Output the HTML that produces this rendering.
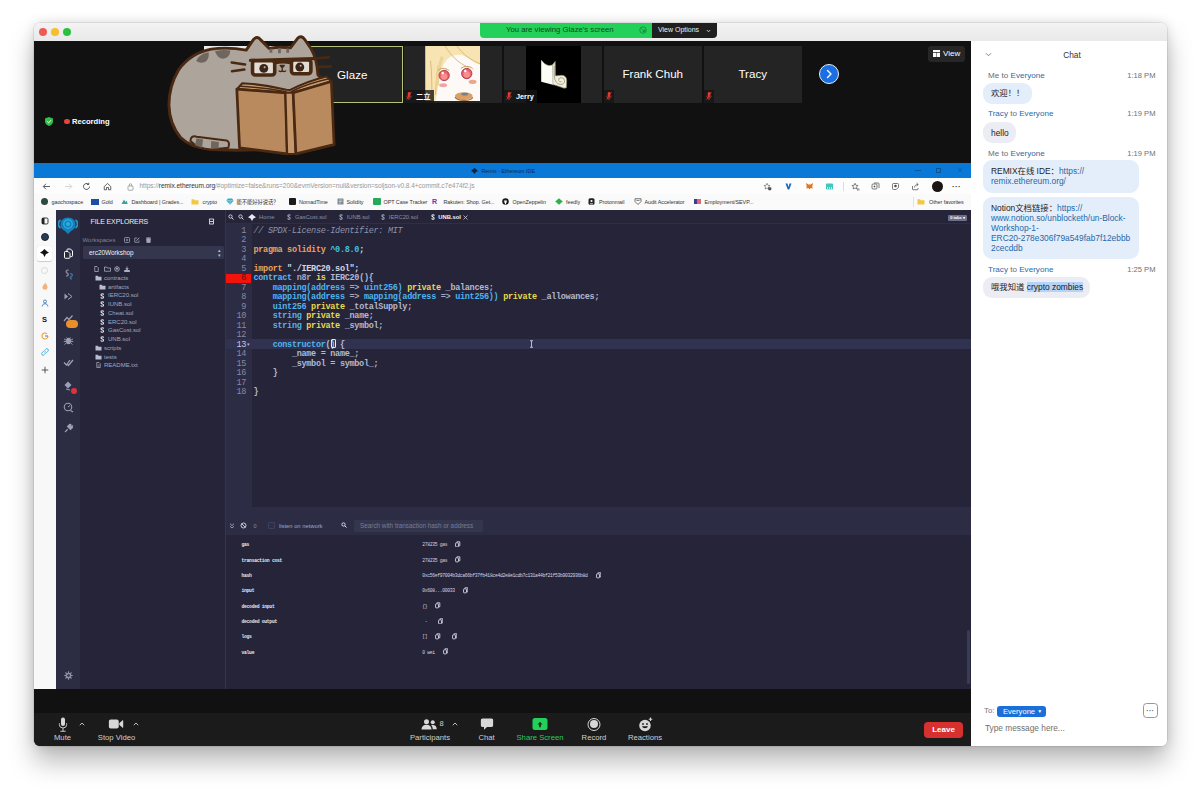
<!DOCTYPE html>
<html lang="en">
<head>
<meta charset="utf-8">
<title>Zoom Meeting</title>
<style>
*{box-sizing:border-box;margin:0;padding:0}
html,body{width:1200px;height:791px;overflow:hidden;background:#fff}
body{font-family:"Liberation Sans","Noto Sans CJK SC",sans-serif;position:relative;color:#222}
.abs{position:absolute}
#win{position:absolute;left:34px;top:22.5px;width:1132.5px;height:723px;border-radius:6px;background:#fff;
 box-shadow:0 0 0 0.5px rgba(0,0,0,.14),0 16px 26px rgba(0,0,0,.27),0 0 12px rgba(0,0,0,.13);overflow:hidden}
#win *{position:absolute}
#win span,#win b,#win i,#win a{position:static}
#titlebar{left:0;top:0;width:1133px;height:18px;background:linear-gradient(#f3f3f3,#e9e9e9)}
.tl{width:8px;height:8px;border-radius:50%;top:5.2px}
#main{left:0;top:18px;width:937px;height:705px;background:#111}
#chat{left:937px;top:18px;width:196px;height:705px;background:#fff}
/* top banner */
#banner{left:446px;top:0.5px;width:171.5px;height:14.5px;background:#23d05a;border-radius:0 0 0 4px;color:#0b4a20;font-size:7.75px;line-height:14.5px;text-align:left;padding-left:26px;white-space:nowrap}
#vopt{left:617.5px;top:0.5px;width:65.5px;height:14.5px;background:#1f1f1f;border-radius:0 0 4px 0;color:#eee;font-size:7px;line-height:14px;text-align:left;padding-left:6.5px;white-space:nowrap}
/* participant tiles */
.tile{top:27.5px;height:57px;background:#242424;width:97.5px}
.tname{color:#fff;font-size:11.6px;width:100%;text-align:center;top:16px;left:0;line-height:16px}
.tlabel{left:0;bottom:0;height:12.5px;background:rgba(20,20,20,.78);color:#fff;font-size:7.3px;line-height:13px;padding:0 3px 0 12px;white-space:nowrap}
.mic{left:1.5px;bottom:1.5px;width:6px;height:10px}
/* toolbar */
#toolbar{left:0;top:682.5px;width:937px;height:41.5px;background:#1b1b1b}
.tb{color:#d0d0d0;font-size:7.7px;text-align:center;white-space:nowrap;top:29px;line-height:10px;transform:translateX(-50%)}
.tbi{top:11px;transform:translateX(-50%)}
</style>
</head>
<body>
<div id="win">
  <div id="titlebar">
    <div class="tl" style="left:5px;background:#ee5b54"></div>
    <div class="tl" style="left:17px;background:#f6bd2f"></div>
    <div class="tl" style="left:29px;background:#2bc13f"></div>
    <div id="banner">You are viewing Glaze's screen</div>
    <div id="vopt">View Options</div><svg style="left:672px;top:6px;width:5px;height:4px" viewBox="0 0 10 8"><path d="M1.500 2L5 5.500L8.500 2" stroke="#eee" stroke-width="1.600" fill="none"/></svg><svg style="left:605px;top:3.500px;width:8px;height:8px" viewBox="0 0 16 16"><circle cx="8" cy="8" r="6.500" stroke="#13803a" stroke-width="1.500" fill="none"/><path d="M4.500 5L11.500 11M11.500 11V6.500M11.500 11H7" stroke="#13803a" stroke-width="1.500" fill="none"/></svg>
  </div>
  <div id="main">
    <div id="strip" style="left:0;top:0;width:937px;height:122px">
      <div class="tile" style="left:170px;top:5.5px;height:56.5px"><div style="left:0;top:0;width:97.5px;height:56.5px;background:#ececec"></div></div>
      <div class="tile" style="left:270px;top:5.5px;height:56.5px;width:98.5px;border:1px solid #b5c27a;background:#232323"><div class="tname" style="top:20px;left:-1px">Glaze</div></div>
      <div class="tile" style="left:370px;top:5.5px;height:56.5px">
        <svg style="left:20.7px;top:0.3px;width:55.5px;height:55px" viewBox="0 0 111 112">
          <rect width="111" height="112" fill="#fdf9f6"/>
          <path d="M0 0H111V38C100 36 92 26 78 20C64 15 50 20 42 30C32 42 28 60 26 80C25 92 22 104 20 112H0Z" fill="#f7e4b2"/>
          <path d="M40 0C52 20 66 34 88 44M64 0C76 16 90 28 111 36M10 30C14 60 12 90 14 112M26 40C22 60 22 80 20 100" stroke="#d7b56e" stroke-width="1.800" fill="none"/>
          <path d="M34 22C28 40 24 58 25 80" stroke="#ecd39a" stroke-width="6" fill="none"/>
          <circle cx="38" cy="60" r="10.500" fill="#ee5f6c"/><circle cx="38" cy="62" r="6.500" fill="#f88f8c"/><circle cx="38" cy="60" r="10.500" fill="none" stroke="#a53546" stroke-width="1.800"/><circle cx="35" cy="55" r="2.500" fill="#fff"/>
          <circle cx="84" cy="56" r="10.500" fill="#ee5f6c"/><circle cx="84" cy="58" r="6.500" fill="#f88f8c"/><circle cx="84" cy="56" r="10.500" fill="none" stroke="#a53546" stroke-width="1.800"/><circle cx="81" cy="51" r="2.500" fill="#fff"/>
          <path d="M26 50C30 44 40 44 48 50M72 46C78 40 90 40 96 46" stroke="#c79a5e" stroke-width="2" fill="none"/>
          <ellipse cx="36" cy="80" rx="8" ry="4" fill="#efa4a6"/><ellipse cx="96" cy="73" rx="8" ry="4.500" fill="#e9a78f"/>
          <ellipse cx="78" cy="102" rx="18" ry="8" fill="#dba066"/><ellipse cx="80" cy="98" rx="7" ry="2.800" fill="#6c8296"/>
          <path d="M60 104C64 113 94 113 96 104" stroke="#a86a36" stroke-width="2.200" fill="none"/>
        </svg>
        <div class="tlabel" style="font-weight:bold">二立</div>
        <svg class="mic" viewBox="0 0 12 18"><rect x="3.5" y="1" width="5" height="10" rx="2.5" fill="#e8382d"/><path d="M1.5 8.5a4.5 4.5 0 0 0 9 0M6 13v4" stroke="#e8382d" stroke-width="1.6" fill="none"/><path d="M10.5 1L1.5 16" stroke="#e8382d" stroke-width="1.8"/></svg>
      </div>
      <div class="tile" style="left:470px;top:5.5px;height:56.5px">
        <div style="left:22px;top:0;width:54.5px;height:56.5px;background:#000"></div>
        <svg style="left:22px;top:0.5px;width:54.2px;height:54.8px" viewBox="258 62 542 548">
          <path d="M524 240L550 206L552 345Q553 352 562 350L612 345Q665 345 665 400L662 470L640 474L545 442L526 440Z" fill="#f1efdf" stroke="#8b8760" stroke-width="7"/>
          <path d="M410 192L442 228Q480 258 524 240L526 440L410 410Z" fill="#fdfdf8"/>
          <path d="M412 194L444 230Q482 260 524 243L548 210" stroke="#a5a177" stroke-width="7" fill="none"/>
          <path d="M540 250L541 352Q548 430 600 436Q644 440 644 400Q642 366 608 368Q578 372 584 398Q590 414 614 410" stroke="#8b8760" stroke-width="7" fill="none"/>
        </svg>
        <div class="tlabel" style="font-weight:bold">Jerry</div>
        <svg class="mic" viewBox="0 0 12 18"><rect x="3.5" y="1" width="5" height="10" rx="2.5" fill="#e8382d"/><path d="M1.5 8.5a4.5 4.5 0 0 0 9 0M6 13v4" stroke="#e8382d" stroke-width="1.6" fill="none"/><path d="M10.5 1L1.5 16" stroke="#e8382d" stroke-width="1.8"/></svg>
      </div>
      <div class="tile" style="left:570px;top:5.5px;height:56.5px"><div class="tname" style="top:20px">Frank Chuh</div><div class="tlabel" style="padding:0;width:10px"></div>
        <svg class="mic" viewBox="0 0 12 18"><rect x="3.5" y="1" width="5" height="10" rx="2.5" fill="#e8382d"/><path d="M1.5 8.5a4.5 4.5 0 0 0 9 0M6 13v4" stroke="#e8382d" stroke-width="1.6" fill="none"/><path d="M10.5 1L1.5 16" stroke="#e8382d" stroke-width="1.8"/></svg>
      </div>
      <div class="tile" style="left:670px;top:5.5px;height:56.5px"><div class="tname" style="top:20px">Tracy</div><div class="tlabel" style="padding:0;width:10px"></div>
        <svg class="mic" viewBox="0 0 12 18"><rect x="3.5" y="1" width="5" height="10" rx="2.5" fill="#e8382d"/><path d="M1.5 8.5a4.5 4.5 0 0 0 9 0M6 13v4" stroke="#e8382d" stroke-width="1.6" fill="none"/><path d="M10.5 1L1.5 16" stroke="#e8382d" stroke-width="1.8"/></svg>
      </div>
      <div style="left:785px;top:23.5px;width:20px;height:20px;border-radius:50%;background:#1b6fe3;border:1.5px solid #e6eefb"></div>
      <svg style="left:791px;top:28.5px;width:8px;height:10px" viewBox="0 0 8 10"><path d="M2.5 1.5L6 5L2.5 8.5" stroke="#fff" stroke-width="1.4" fill="none" stroke-linecap="round" stroke-linejoin="round"/></svg>
      <!-- view button -->
      <div style="left:894px;top:5px;width:37px;height:16px;background:#262626;border-radius:3px"></div>
      <svg style="left:899px;top:9px;width:7px;height:7px" viewBox="0 0 14 14"><path d="M0 0h14v4H0zM0 5.5h6.5v8.5H0zM7.5 5.5H14v8.5H7.5z" fill="#fff"/></svg>
      <div style="left:909px;top:5px;color:#fff;font-size:8px;line-height:16px">View</div>
      <!-- recording -->
      <svg style="left:11px;top:76px;width:8px;height:9px" viewBox="0 0 16 18"><path d="M8 0L16 3V9C16 13.5 12.5 16.8 8 18C3.500 16.800 0 13.500 0 9V3Z" fill="#2fc04a"/><path d="M4.500 9L7.200 11.600L11.800 6.500" stroke="#fff" stroke-width="2" fill="none"/></svg>
      <div style="left:30px;top:78px;width:5.5px;height:5.5px;border-radius:50%;background:#e5443b"></div>
      <div style="left:38px;top:75px;color:#fff;font-size:7.6px;font-weight:bold;line-height:11px">Recording</div>
      <!-- cat -->
      <svg id="cat" style="left:126px;top:-10.5px;width:190px;height:135px" viewBox="0 0 1113 791">
        <g stroke-linecap="round" stroke-linejoin="round">
        <path d="M505 118 L548 55 Q570 32 590 58 L640 108 Q700 96 765 104 L805 50 Q828 26 848 56 L885 110 Q920 170 925 262 L960 300 L940 690 L450 705 L300 700 Q180 690 120 630 Q55 550 52 440 Q52 330 110 232 Q180 135 300 112 Q400 98 505 118Z" fill="#ada49c" stroke="#4a2913" stroke-width="17"/>
        <path d="M212 182 Q225 142 285 130 Q290 172 262 188 Q235 198 212 182Z" fill="#6f6660"/>
        <path d="M322 124 Q370 114 412 120 Q410 162 372 168 Q335 166 322 124Z" fill="#6f6660"/>
        <path d="M650 110V134M700 106V136M748 108V134" stroke="#6f6660" stroke-width="16" stroke-linecap="butt"/>
        <path d="M178 650 Q180 615 215 625 L390 648 Q412 655 400 690 L300 700 Q220 695 178 650Z" fill="#ada49c" stroke="#4a2913" stroke-width="12"/>
        <path d="M214 634 L252 642 L246 690 L205 676Z M300 650 L345 656 L343 694 L298 694Z" fill="#6f6660"/>
        <path d="M420 190 L498 202 M422 242 L494 232 M925 166 L990 160 M930 216 L1000 214" stroke="#4a2913" stroke-width="15" fill="none"/>
        <rect x="542" y="180" width="130" height="84" rx="16" fill="#e2dcd4" stroke="#4a2913" stroke-width="21"/>
        <rect x="770" y="176" width="114" height="80" rx="16" fill="#e2dcd4" stroke="#4a2913" stroke-width="21"/>
        <path d="M530 178 L900 168 M676 192 Q720 182 766 192" stroke="#4a2913" stroke-width="19" fill="none"/>
        <circle cx="608" cy="225" r="26" fill="#3a2518"/><circle cx="819" cy="217" r="26" fill="#3a2518"/>
        <circle cx="613" cy="218" r="6" fill="#b9b0a6"/><circle cx="824" cy="210" r="6" fill="#b9b0a6"/>
        <path d="M704 208 H728 L716 222Z M716 222 V236 M698 240 Q708 248 716 238 Q724 248 736 240" stroke="#4a2913" stroke-width="8" fill="#4a2913"/>
        <path d="M482 312 Q610 318 740 350 L760 352 Q860 300 975 272 L1003 302 L780 368 L735 368 L452 346Z" fill="#c99d72" stroke="#4a2913" stroke-width="12"/>
        <path d="M468 330 Q610 336 738 362 M770 360 Q870 312 990 286" stroke="#4a2913" stroke-width="9" fill="none"/>
        <path d="M450 346 L735 368 L745 726 L466 690Z" fill="#b98a5e" stroke="#4a2913" stroke-width="16"/>
        <path d="M735 368 L780 368 L796 726 L745 726Z" fill="#c4986c" stroke="#4a2913" stroke-width="12"/>
        <path d="M780 368 L1004 302 L1020 672 L796 726Z" fill="#b98a5e" stroke="#4a2913" stroke-width="16"/>
        </g>
      </svg>
    </div>
    <style>
    #share{left:0;top:122.5px;width:937px;height:526px;background:#252439;overflow:hidden}
    #share .bm{top:33.5px;font-size:5.42px;line-height:10px;color:#333;white-space:nowrap;letter-spacing:-.05px}
    #share .bi{top:35px;width:7px;height:7px}
    #share .ni{top:19px;width:9px;height:9px}
    </style>
    <div id="share">
      <div style="left:0;top:0;width:937px;height:14.5px;background:#0a78d6"></div>
      <svg style="left:436.500px;top:4.500px;width:7px;height:6px" viewBox="0 0 14 12"><path d="M7 0L11 3L14 6L10 8L7 12L4 8L0 6L3 3Z" fill="#10243c"/></svg>
      <div style="left:447.500px;top:3.500px;font-size:5.350px;line-height:9px;color:#0d2a4a;white-space:nowrap">Remix - Ethereum IDE</div>
      <div style="left:881px;top:7px;width:6px;height:1px;background:#0a5596"></div>
      <div style="left:902px;top:4.500px;width:5px;height:5px;border:1px solid #0a5596"></div>
      <svg style="left:922.500px;top:4px;width:6px;height:6px" viewBox="0 0 12 12"><path d="M1 1L11 11M11 1L1 11" stroke="#0a5596" stroke-width="1.300"/></svg>
      <!-- address row -->
      <div style="left:0;top:14.500px;width:937px;height:16.500px;background:#fdfdfd"></div>
      <svg class="ni" style="left:8px" viewBox="0 0 18 18"><path d="M16 9H3M8 3.500L2.500 9L8 14.500" stroke="#333" stroke-width="1.600" fill="none"/></svg>
      <svg class="ni" style="left:29.500px" viewBox="0 0 18 18"><path d="M2 9H15M10 3.500L15.500 9L10 14.500" stroke="#ccc" stroke-width="1.600" fill="none"/></svg>
      <svg class="ni" style="left:48px" viewBox="0 0 18 18"><path d="M15 9a6 6 0 1 1-2-4.500M13.500 1.500V5H10" stroke="#333" stroke-width="1.600" fill="none"/></svg>
      <svg class="ni" style="left:69px" viewBox="0 0 18 18"><path d="M2.500 9L9 3L15.500 9V15.500H11V11H7V15.500H2.500Z" stroke="#333" stroke-width="1.500" fill="none" stroke-linejoin="round"/></svg>
      <svg style="left:92.500px;top:19.500px;width:7px;height:8px" viewBox="0 0 14 16"><rect x="2" y="6" width="10" height="8.500" rx="1.500" stroke="#888" stroke-width="1.400" fill="none"/><path d="M4.500 6V4a2.500 2.500 0 0 1 5 0V6" stroke="#888" stroke-width="1.400" fill="none"/></svg>
      <div style="left:105.500px;top:18px;font-size:6.620px;line-height:10px;color:#999;white-space:nowrap;letter-spacing:-.06px">https://<span style="color:#333">remix.ethereum.org</span>/#optimize=false&amp;runs=200&amp;evmVersion=null&amp;version=soljson-v0.8.4+commit.c7e474f2.js</div>
      <!-- right icons -->
      <svg class="ni" style="left:729px" viewBox="0 0 18 18"><path d="M8 2.500L9.800 6.500L14 7L11 10L11.800 14L8 12L4.200 14L5 10L2 7L6.200 6.500Z" stroke="#555" stroke-width="1.200" fill="none"/><circle cx="13.500" cy="13.500" r="3.500" fill="#555"/></svg>
      <svg class="ni" style="left:750px" viewBox="0 0 18 18"><path d="M3 3H7L9 10L11 3H15L10.500 15H7.500Z" fill="#1769c4"/></svg>
      <svg class="ni" style="left:770.500px" viewBox="0 0 18 18"><path d="M2 2L7 5H11L16 2L14.500 9L15.500 13L11 12L10 14H8L7 12L2.500 13L3.500 9Z" fill="#e2761b"/></svg>
      <svg class="ni" style="left:790.500px" viewBox="0 0 18 18"><rect x="2" y="3" width="14" height="12" rx="1.500" fill="#3fc7c0"/><path d="M5 10V15M9 10V15M13 10V15" stroke="#fff" stroke-width="1.200"/></svg>
      <div style="left:808.500px;top:18.500px;width:1px;height:9px;background:#ddd"></div>
      <svg class="ni" style="left:817px" viewBox="0 0 18 18"><path d="M8 2.500L9.800 6.500L14 7L11 10L11.800 14L8 12L4.200 14L5 10L2 7L6.200 6.500Z" stroke="#444" stroke-width="1.300" fill="none"/><path d="M12 14H17M12 16H17" stroke="#444" stroke-width="1.200"/></svg>
      <svg class="ni" style="left:837px" viewBox="0 0 18 18"><rect x="2" y="4" width="10" height="10" rx="2" stroke="#444" stroke-width="1.400" fill="none"/><path d="M6 2H14a2 2 0 0 1 2 2V12" stroke="#444" stroke-width="1.400" fill="none"/><path d="M7 7V11M5 9H9" stroke="#444" stroke-width="1.300"/></svg>
      <svg class="ni" style="left:857px" viewBox="0 0 18 18"><path d="M3 5a2 2 0 0 1 2-2H13a2 2 0 0 1 2 2V11L10 15H5a2 2 0 0 1-2-2Z" stroke="#444" stroke-width="1.400" fill="none"/><circle cx="9" cy="8" r="2.500" fill="#444"/></svg>
      <svg class="ni" style="left:877px" viewBox="0 0 18 18"><path d="M3 8V14a1.500 1.500 0 0 0 1.500 1.500h8A1.500 1.500 0 0 0 14 14V12" stroke="#444" stroke-width="1.400" fill="none"/><path d="M7 11c0-4 3-6 7-6M11 2L14.500 5L11 8" stroke="#444" stroke-width="1.400" fill="none"/></svg>
      <div style="left:897.500px;top:17.500px;width:11px;height:11px;border-radius:50%;background:#1a1512"></div>
      <div style="left:918px;top:19px;font-size:8px;line-height:9px;color:#333;font-weight:bold;letter-spacing:.3px">···</div>
      <!-- bookmarks row -->
      <div style="left:0;top:31px;width:937px;height:16px;background:#fafafa"></div><div style="left:879px;top:34px;width:1px;height:10px;background:#e2e2e2"></div>
      <div class="bi" style="left:6.500px;border-radius:50%;background:#2d4a3e"></div><div class="bm" style="left:17.500px">gaochospace</div>
      <div class="bi" style="left:56.500px;background:#1c4fa0;top:35.500px;height:6px;width:8px"></div><div class="bm" style="left:67.500px">Gold</div>
      <svg class="bi" style="left:86.500px" viewBox="0 0 14 14"><path d="M1 12L6 3L9 8L11 5L13.500 12Z" fill="#3aa5a0"/></svg><div class="bm" style="left:97.500px">Dashboard | Grades...</div>
      <svg class="bi" style="left:157px;width:8px" viewBox="0 0 16 14"><path d="M1 2.500h5l1.500 2H15V13H1Z" fill="#f2c744"/></svg><div class="bm" style="left:168.500px">crypto</div>
      <svg class="bi" style="left:191.500px;width:8px" viewBox="0 0 16 14"><path d="M4 1H12L15.500 5L8 13.500L.5 5Z" fill="#35a9c9"/><path d="M.5 5H15.500M5.500 5L8 13M10.500 5L8 13" stroke="#d6f0f6" stroke-width=".8" fill="none"/></svg><div class="bm" style="left:202.500px;font-family:'Liberation Sans','Noto Sans CJK SC',sans-serif;font-size:5.300px">能不能好好说话？</div>
      <div class="bi" style="left:254.500px;background:#1b1b1b;border-radius:1px"></div><div class="bm" style="left:265px">NomadTime</div>
      <svg class="bi" style="left:302.500px" viewBox="0 0 14 14"><rect x="1" y="1" width="12" height="12" rx="1" fill="#7b8794"/><path d="M3.500 4H10.500M3.500 7H10.500M3.500 10H8" stroke="#fff" stroke-width="1"/></svg><div class="bm" style="left:312.500px">Solidity</div>
      <div class="bi" style="left:339px;background:#27a85a;border-radius:1px;width:8px"></div><div class="bm" style="left:349.500px">OPT Case Tracker</div>
      <div class="bm" style="left:398px;color:#7a2cb8;font-weight:bold;font-size:7px;top:34px">R</div><div class="bm" style="left:409.500px">Rakuten: Shop. Get...</div>
      <svg class="bi" style="left:467.500px" viewBox="0 0 14 14"><circle cx="7" cy="7" r="6.500" fill="#1b1b1b"/><path d="M4.300 4L5 6C4 7.500 4.500 9.500 6 10V12.500H8V10C9.500 9.500 10 7.500 9 6L9.700 4L8 5H6Z" fill="#fff"/></svg><div class="bm" style="left:478.500px">OpenZeppelin</div>
      <svg class="bi" style="left:520.500px;width:8px" viewBox="0 0 16 14"><path d="M8 .5L15.500 7L8 13.500L.5 7Z" fill="#2bb24c"/></svg><div class="bm" style="left:532px">feedly</div>
      <svg class="bi" style="left:554px" viewBox="0 0 14 14"><rect x="1" y=".5" width="12" height="13" rx="3" fill="#222"/><circle cx="7" cy="6" r="2.200" fill="#fff"/><path d="M4 11.500h6" stroke="#fff" stroke-width="1.500"/></svg><div class="bm" style="left:565px">Protonmail</div>
      <svg class="bi" style="left:599.500px;width:8px" viewBox="0 0 16 14"><path d="M2 1.500H14V7L8 13L2 7Z" stroke="#444" stroke-width="1.500" fill="none"/><path d="M5 5H11" stroke="#444" stroke-width="1.300"/></svg><div class="bm" style="left:610.500px">Audit Accelerator</div>
      <div class="bi" style="left:660px;top:36px;width:7px;height:5px;background:linear-gradient(90deg,#3c3b8e 42%,#d86a72 42%)"></div><div class="bm" style="left:670.500px">Employment/SEVP...</div>
      <svg class="bi" style="left:883px;width:8px" viewBox="0 0 16 14"><path d="M1 2.500h5l1.500 2H15V13H1Z" fill="#f2c744"/></svg><div class="bm" style="left:895px">Other favorites</div>
      <style>
      #share .si{left:6.500px;width:8px;height:8px}
      #share .ri{left:28.500px;width:11px;height:11px}
      #share .ft{font-size:6px;line-height:8px;color:#a3a7bd;white-space:nowrap}
      #share .fi{width:5px;height:6px}
      </style>
      <!-- edge vertical strip -->
      <div style="left:0;top:47px;width:22px;height:479px;background:#f8f8f8"></div>
      <svg class="si" style="top:54px" viewBox="0 0 16 16"><rect x="2" y="2" width="12" height="12" rx="2.500" stroke="#222" stroke-width="1.800" fill="none"/><rect x="2" y="2" width="5" height="12" fill="#222"/></svg>
      <div class="si" style="top:69.500px;border-radius:50%;background:#2a3a55;border:1.500px solid #1d2434"></div>
      <div style="left:3px;top:82.500px;width:15px;height:15px;border-radius:2.500px;background:#fff;box-shadow:0 .5px 1px rgba(0,0,0,.18)"></div>
      <svg class="si" style="top:85.500px;width:9px;left:6px" viewBox="0 0 18 16"><path d="M9 0L13 4L18 7.500L12 10L9 16L6 10L0 7.500L5 4Z" fill="#111"/></svg>
      <div class="si" style="top:103.500px;width:7px;height:7px;left:7px;border-radius:50%;border:1.500px solid #d9d9d9"></div>
      <svg class="si" style="top:119px" viewBox="0 0 16 16"><path d="M8 1C11 5 13 7 13 10.500a5 5 0 0 1-10 0C3 8 5 7 5.500 4.500C7 5.500 7.500 4 8 1Z" fill="#f3b27a"/></svg>
      <svg class="si" style="top:136px" viewBox="0 0 16 16"><circle cx="8" cy="5" r="3" fill="none" stroke="#3f78b8" stroke-width="1.800"/><path d="M2.500 15c0-4 2.500-5.500 5.500-5.500s5.500 1.500 5.500 5.500" fill="none" stroke="#3f78b8" stroke-width="1.800"/></svg>
      <div class="si" style="top:151.500px;font-size:7.500px;line-height:9px;font-weight:bold;color:#111;left:8px">S</div>
      <svg class="si" style="top:168.500px" viewBox="0 0 16 16"><path d="M14 8a6 6 0 1 1-2-4.500" stroke="#e8a13c" stroke-width="2.200" fill="none"/><path d="M8 8H14" stroke="#4a86e8" stroke-width="2.200"/></svg>
      <svg class="si" style="top:185px" viewBox="0 0 16 16"><path d="M6.500 9.500a3 3 0 0 0 4.300 0l3-3a3 3 0 0 0-4.300-4.300l-1 1M9.500 6.500a3 3 0 0 0-4.300 0l-3 3a3 3 0 0 0 4.300 4.300l1-1" stroke="#35a8d4" stroke-width="1.800" fill="none"/></svg>
      <svg class="si" style="top:203px" viewBox="0 0 16 16"><path d="M8 1.500V14.500M1.500 8H14.500" stroke="#333" stroke-width="1.600"/></svg>
      <!-- remix icon panel -->
      <div style="left:22px;top:47px;width:24px;height:479px;background:#2c2c43"></div>
      <svg style="left:24px;top:52.500px;width:20px;height:19px" viewBox="0 0 40 38"><path d="M20 3C29 3 35 9 35 17C35 24 31 28 26 30L20 36L14 30C9 28 5 24 5 17C5 9 11 3 20 3Z" fill="#1680b8"/><circle cx="20" cy="16" r="8.500" fill="none" stroke="#2aaee6" stroke-width="2.500"/><circle cx="20" cy="16" r="4" fill="#2aaee6"/><path d="M4 23C0 20 0 12 4 9M36 23C40 20 40 12 36 9" stroke="#1e98d2" stroke-width="3.500" fill="none" stroke-linecap="round"/></svg>
      <svg class="ri" style="top:84.500px" viewBox="0 0 22 22"><path d="M8 6V3.500A1.500 1.500 0 0 1 9.500 2H15L19 6V15.500A1.500 1.500 0 0 1 17.500 17H15" stroke="#fff" stroke-width="2" fill="none"/><path d="M3 8.500A1.500 1.500 0 0 1 4.500 7H10L14 11V19A1.500 1.500 0 0 1 12.500 20.500H4.500A1.500 1.500 0 0 1 3 19Z" stroke="#fff" stroke-width="2" fill="none"/></svg>
      <svg class="ri" style="top:106px" viewBox="0 0 22 22"><path d="M11 2C6 2 5 6 8 8C12 10.500 11 14 6 14" stroke="#8a7f95" stroke-width="3" fill="none"/><path d="M14 9C19 9 20 13 17 15C13 17 14 20 18 20" stroke="#3d6d9d" stroke-width="3" fill="none"/></svg>
      <svg class="ri" style="top:128px" viewBox="0 0 22 22"><path d="M3 5L10 11L3 17Z" fill="#9aa0b8"/><path d="M10 5L18 11L10 17" stroke="#9aa0b8" stroke-width="2" fill="none"/></svg>
      <svg class="ri" style="top:150.500px" viewBox="0 0 22 22"><path d="M2 14L8 7L12 11L19 3" stroke="#9aa0b8" stroke-width="2.400" fill="none"/></svg>
      <div style="left:32px;top:157px;width:12px;height:7.500px;border-radius:4px;background:#e8912c"></div>
      <svg class="ri" style="top:172px" viewBox="0 0 22 22"><ellipse cx="11" cy="12" rx="5" ry="6.500" fill="#9aa0b8"/><path d="M2 8L6 10M20 8L16 10M1.500 13H6M20.500 13H16M3 19L6.500 16M19 19L15.500 16M7 5L9 7M15 5L13 7" stroke="#9aa0b8" stroke-width="1.800"/></svg>
      <svg class="ri" style="top:193.500px" viewBox="0 0 22 22"><path d="M2 11L7 16L14 6M9 15L11 17L20 6" stroke="#9aa0b8" stroke-width="2.600" fill="none"/></svg>
      <svg class="ri" style="top:216.500px" viewBox="0 0 22 22"><path d="M3 10L10 3L17 10L10 17Z" fill="#9aa0b8"/><path d="M6 18L14 20" stroke="#9aa0b8" stroke-width="2"/></svg>
      <div style="left:36.500px;top:224.500px;width:6.500px;height:6.500px;border-radius:50%;background:#e0323c"></div>
      <svg class="ri" style="top:238.500px" viewBox="0 0 22 22"><circle cx="10" cy="10" r="7.500" stroke="#9aa0b8" stroke-width="2.200" fill="none"/><path d="M10 10L14 7" stroke="#9aa0b8" stroke-width="2"/><path d="M15 17L20 20" stroke="#9aa0b8" stroke-width="2.500"/></svg>
      <svg class="ri" style="top:260px" viewBox="0 0 22 22"><path d="M13 3L19 9L15 13L9 7ZM9.500 12.500L4 18M14 2L17 5M17 8L20 5" stroke="#9aa0b8" stroke-width="2.200" fill="#9aa0b8"/></svg>
      <svg style="left:30px;top:507.500px;width:9px;height:9px" viewBox="0 0 18 18"><circle cx="9" cy="9" r="4.200" stroke="#8d92a8" stroke-width="3" fill="none"/><path d="M9 .5V4M9 14V17.500M.5 9H4M14 9H17.500M3 3L5.500 5.500M12.500 12.500L15 15M15 3L12.500 5.500M3 15L5.500 12.500" stroke="#8d92a8" stroke-width="2.200"/></svg>
      <!-- file explorer panel -->
      <div style="left:46px;top:47px;width:145px;height:479px;background:#252439"></div>
      <div style="left:191px;top:47px;width:1px;height:479px;background:#34364d"></div>
      <div style="left:56.500px;top:53.500px;font-size:6.950px;line-height:10px;color:#eef0f6;white-space:nowrap;letter-spacing:-.1px">FILE EXPLORERS</div>
      <svg style="left:174px;top:55px;width:7px;height:7px" viewBox="0 0 14 14"><rect x="2" y="1" width="10" height="12" rx="1.500" fill="#c9cce0"/><rect x="4" y="3" width="6" height="3" fill="#252439"/><rect x="4" y="8" width="6" height="3" fill="#252439"/></svg>
      <div class="ft" style="left:48.500px;top:72.500px;color:#7f849c;font-size:6px">Workspaces</div>
      <svg class="fi" style="left:89.500px;top:73.500px;width:6px" viewBox="0 0 12 12"><rect x="1" y="1" width="10" height="10" rx="1.500" stroke="#a3a7bd" stroke-width="1.500" fill="none"/><path d="M6 3.500V8.500M3.500 6H8.500" stroke="#a3a7bd" stroke-width="1.400"/></svg>
      <svg class="fi" style="left:100px;top:73.500px;width:6px" viewBox="0 0 12 12"><path d="M10 7V10.500H1.500V2H6" stroke="#a3a7bd" stroke-width="1.500" fill="none"/><path d="M5 7.500L10.500 1.500" stroke="#a3a7bd" stroke-width="2"/></svg>
      <svg class="fi" style="left:111.500px;top:73.500px" viewBox="0 0 10 12"><path d="M1 3H9L8.300 11.500H1.700ZM.5 1.500H9.500M3.500 .5H6.500" stroke="#a3a7bd" stroke-width="1.200" fill="#a3a7bd"/></svg>
      <div style="left:48.500px;top:83px;width:141.500px;height:13px;background:#34364e;border-radius:1.500px"></div>
      <div style="left:55px;top:84.500px;font-size:6.400px;line-height:10px;color:#f2f3f8;white-space:nowrap">erc20Workshop</div>
      <div style="left:184px;top:84.500px;font-size:5px;line-height:5px;color:#b8bbcf">▴<br>▾</div>
      <!-- tree tool icons -->
      <svg class="fi" style="left:60px;top:103px" viewBox="0 0 10 12"><path d="M1.500 1H6L8.500 3.500V11H1.500Z" stroke="#c5c8da" stroke-width="1.300" fill="none"/></svg>
      <svg class="fi" style="left:69.500px;top:103px;width:7px" viewBox="0 0 14 12"><path d="M1 2h4l1.500 2H13V10.500H1Z" stroke="#c5c8da" stroke-width="1.300" fill="none"/></svg>
      <svg class="fi" style="left:80px;top:103px;width:6px" viewBox="0 0 12 12"><circle cx="6" cy="6" r="4.600" stroke="#c5c8da" stroke-width="1.500" fill="none"/><circle cx="6" cy="5.500" r="1.800" fill="#c5c8da"/></svg>
      <svg class="fi" style="left:90px;top:103px;width:6px" viewBox="0 0 12 12"><path d="M6 1V7M3.500 5L6 7.500L8.500 5M1 9H11V11H1Z" stroke="#c5c8da" stroke-width="1.400" fill="#c5c8da"/></svg>
      <svg class="fi" style="left:61.0px;top:112.0px;width:7px" viewBox="0 0 14 12"><path d="M1 1.500h4.500l1.500 2H13V11H1Z" fill="#b9bccf"/></svg><div class="ft" style="left:70.0px;top:110.8px">contracts</div>
      <svg class="fi" style="left:64.5px;top:120.7px;width:7px" viewBox="0 0 14 12"><path d="M1 1.500h4.500l1.500 2H13V11H1Z" fill="#b9bccf"/></svg><div class="ft" style="left:74.0px;top:119.5px">artifacts</div>
      <svg class="fi" style="left:65.5px;top:129.0px;width:4.5px;height:6px;margin-top:.5px" viewBox="0 0 10 14"><path d="M8 4C8 .8 2 .8 2 4.200C2 7.500 8 6.500 8 9.800C8 13.200 2 13.200 2 10" stroke="#e4e6f2" stroke-width="2.600" fill="none"/></svg><div class="ft" style="left:74.0px;top:128.3px">IERC20.sol</div>
      <svg class="fi" style="left:65.5px;top:137.7px;width:4.5px;height:6px;margin-top:.5px" viewBox="0 0 10 14"><path d="M8 4C8 .8 2 .8 2 4.200C2 7.500 8 6.500 8 9.800C8 13.200 2 13.200 2 10" stroke="#e4e6f2" stroke-width="2.600" fill="none"/></svg><div class="ft" style="left:74.0px;top:137.0px">IUNB.sol</div>
      <svg class="fi" style="left:65.5px;top:146.5px;width:4.5px;height:6px;margin-top:.5px" viewBox="0 0 10 14"><path d="M8 4C8 .8 2 .8 2 4.200C2 7.500 8 6.500 8 9.800C8 13.200 2 13.200 2 10" stroke="#e4e6f2" stroke-width="2.600" fill="none"/></svg><div class="ft" style="left:74.0px;top:145.8px">Cheat.sol</div>
      <svg class="fi" style="left:65.5px;top:155.2px;width:4.5px;height:6px;margin-top:.5px" viewBox="0 0 10 14"><path d="M8 4C8 .8 2 .8 2 4.200C2 7.500 8 6.500 8 9.800C8 13.200 2 13.200 2 10" stroke="#e4e6f2" stroke-width="2.600" fill="none"/></svg><div class="ft" style="left:74.0px;top:154.5px">ERC20.sol</div>
      <svg class="fi" style="left:65.5px;top:163.9px;width:4.5px;height:6px;margin-top:.5px" viewBox="0 0 10 14"><path d="M8 4C8 .8 2 .8 2 4.200C2 7.500 8 6.500 8 9.800C8 13.200 2 13.200 2 10" stroke="#e4e6f2" stroke-width="2.600" fill="none"/></svg><div class="ft" style="left:74.0px;top:163.2px">GasCost.sol</div>
      <svg class="fi" style="left:65.5px;top:172.7px;width:4.5px;height:6px;margin-top:.5px" viewBox="0 0 10 14"><path d="M8 4C8 .8 2 .8 2 4.200C2 7.500 8 6.500 8 9.800C8 13.200 2 13.200 2 10" stroke="#e4e6f2" stroke-width="2.600" fill="none"/></svg><div class="ft" style="left:74.0px;top:172.0px">UNB.sol</div>
      <svg class="fi" style="left:61.0px;top:181.9px;width:7px" viewBox="0 0 14 12"><path d="M1 1.500h4.500l1.500 2H13V11H1Z" fill="#b9bccf"/></svg><div class="ft" style="left:70.0px;top:180.7px">scripts</div>
      <svg class="fi" style="left:61.0px;top:190.7px;width:7px" viewBox="0 0 14 12"><path d="M1 1.500h4.500l1.500 2H13V11H1Z" fill="#b9bccf"/></svg><div class="ft" style="left:70.0px;top:189.5px">tests</div>
      <svg class="fi" style="left:61.5px;top:199.4px" viewBox="0 0 10 12"><path d="M1.500 1H6L8.500 3.500V11H1.500Z" stroke="#b9bccf" stroke-width="1.300" fill="none"/><path d="M3 6H7M3 8.500H7" stroke="#b9bccf" stroke-width="1"/></svg><div class="ft" style="left:70.0px;top:198.2px">README.txt</div>
      <style>
      #share .cl{left:219.5px;height:9.5px;font-family:"Liberation Mono","DejaVu Sans Mono",monospace;font-size:8.5px;line-height:9.5px;white-space:pre;font-weight:bold;letter-spacing:-0.3px;margin-top:1.3px}
      #share .ln{left:192px;width:20px;text-align:right;height:9.5px;font-family:"Liberation Mono","DejaVu Sans Mono",monospace;font-size:8.5px;letter-spacing:-0.3px;line-height:9.5px;color:#868aa4;margin-top:1.3px}
      #share .tab{top:49.5px;font-size:5.8px;line-height:9px;color:#8b90a8;white-space:nowrap}
      #share .tabi{top:51.3px;width:4px;height:6px}
      </style>
      <!-- tab bar -->
      <div style="left:192px;top:47px;width:745px;height:14px;background:#252439;border-bottom:1px solid #2d2f46"></div>
      <svg style="left:193.500px;top:51px;width:6px;height:6px" viewBox="0 0 12 12"><circle cx="5" cy="5" r="3.300" stroke="#d6d9ea" stroke-width="1.800" fill="none"/><path d="M7.500 7.500L11 11" stroke="#d6d9ea" stroke-width="2"/></svg>
      <svg style="left:204px;top:51px;width:6px;height:6px" viewBox="0 0 12 12"><circle cx="5" cy="5" r="3.300" stroke="#d6d9ea" stroke-width="1.800" fill="none"/><path d="M7.500 7.500L11 11" stroke="#d6d9ea" stroke-width="2"/></svg>
      <svg style="left:213.500px;top:50.500px;width:8px;height:7px" viewBox="0 0 16 14"><path d="M8 0L12 3.500L16 6.500L11 9L8 14L5 9L0 6.500L4 3.500Z" fill="#e6e8f4"/></svg>
      <div class="tab" style="left:225px">Home</div>
      <svg class="tabi" style="left:252.8px" viewBox="0 0 8 13"><path d="M6.500 3.800C6.500 1 1.500 1 1.500 4C1.500 6.800 6.500 6.200 6.500 9C6.500 12 1.500 12 1.500 9.200" stroke="#a9adc4" stroke-width="2.200" fill="none"/></svg><div class="tab" style="left:261.0px">GasCost.sol</div>
      <svg class="tabi" style="left:304.8px" viewBox="0 0 8 13"><path d="M6.500 3.800C6.500 1 1.500 1 1.500 4C1.500 6.800 6.500 6.200 6.500 9C6.500 12 1.500 12 1.500 9.200" stroke="#a9adc4" stroke-width="2.200" fill="none"/></svg><div class="tab" style="left:312.7px">IUNB.sol</div>
      <svg class="tabi" style="left:347.0px" viewBox="0 0 8 13"><path d="M6.500 3.800C6.500 1 1.500 1 1.500 4C1.500 6.800 6.500 6.200 6.500 9C6.500 12 1.500 12 1.500 9.200" stroke="#a9adc4" stroke-width="2.200" fill="none"/></svg><div class="tab" style="left:354.8px">IERC20.sol</div>
      <svg class="tabi" style="left:397.0px" viewBox="0 0 8 13"><path d="M6.500 3.800C6.500 1 1.500 1 1.500 4C1.500 6.800 6.500 6.200 6.500 9C6.500 12 1.500 12 1.500 9.200" stroke="#f4f5fa" stroke-width="2.200" fill="none"/></svg><div class="tab" style="left:404.3px;color:#f4f5fa;font-weight:bold">UNB.sol</div>
      <svg style="left:429px;top:52px;width:5px;height:5px" viewBox="0 0 10 10"><path d="M1 1L9 9M9 1L1 9" stroke="#c9ccdf" stroke-width="1.600"/></svg>
      <div style="left:914px;top:51.500px;width:19px;height:6.500px;background:#6b6f8a;border-radius:1px;color:#fff;font-size:4px;line-height:6.500px;text-align:center;font-weight:bold">0 tabs ▾</div>
      <div style="left:192px;top:61px;width:25.500px;height:282.500px;background:#2c2c45"></div>
      <div style="left:192px;top:175.800px;width:745px;height:9.800px;background:#313250"></div>
      <div style="left:192px;top:110.500px;width:25px;height:9.500px;background:#f2140c"></div>
      <div class="ln" style="top:62.25px">1</div><div class="cl" style="top:62.25px"><span style="color:#8f93ab;font-style:italic;font-weight:normal">// SPDX-License-Identifier: MIT</span></div>
      <div class="ln" style="top:71.75px">2</div>
      <div class="ln" style="top:81.25px">3</div><div class="cl" style="top:81.25px"><span style="color:#eaa262">pragma solidity</span><span style="color:#3fc1de"> ^0.8.0</span><span style="color:#d4d7e6">;</span></div>
      <div class="ln" style="top:90.75px">4</div>
      <div class="ln" style="top:100.25px">5</div><div class="cl" style="top:100.25px"><span style="color:#eaa262">import</span><span style="color:#d4d7e6"> &quot;./IERC20.sol&quot;;</span></div>
      <div class="ln" style="top:109.75px;color:#5a1010">6</div><div class="cl" style="top:109.75px"><span style="color:#5fb6ef">contract</span><span style="color:#a3a7c0"> n8r </span><span style="color:#e6d94e">is</span><span style="color:#b4b8cf"> IERC20(){</span></div>
      <div class="ln" style="top:119.25px">7</div><div class="cl" style="top:119.25px"><span style="color:#4fb3ee">    mapping(address</span><span style="color:#a3a7c0"> =&gt; </span><span style="color:#4fb3ee">uint256)</span><span style="color:#e6d94e"> private</span><span style="color:#b4b8cf"> _balances;</span></div>
      <div class="ln" style="top:128.75px">8</div><div class="cl" style="top:128.75px"><span style="color:#4fb3ee">    mapping(address</span><span style="color:#a3a7c0"> =&gt; </span><span style="color:#4fb3ee">mapping(address</span><span style="color:#a3a7c0"> =&gt; </span><span style="color:#4fb3ee">uint256))</span><span style="color:#e6d94e"> private</span><span style="color:#b4b8cf"> _allowances;</span></div>
      <div class="ln" style="top:138.25px">9</div><div class="cl" style="top:138.25px"><span style="color:#4fb3ee">    uint256</span><span style="color:#e6d94e"> private</span><span style="color:#b4b8cf"> _totalSupply;</span></div>
      <div class="ln" style="top:147.75px">10</div><div class="cl" style="top:147.75px"><span style="color:#4fb3ee">    string</span><span style="color:#e6d94e"> private</span><span style="color:#b4b8cf"> _name;</span></div>
      <div class="ln" style="top:157.25px">11</div><div class="cl" style="top:157.25px"><span style="color:#4fb3ee">    string</span><span style="color:#e6d94e"> private</span><span style="color:#b4b8cf"> _symbol;</span></div>
      <div class="ln" style="top:166.75px">12</div>
      <div class="ln" style="top:176.25px;color:#c9ccdf">13</div><div class="cl" style="top:176.25px"><span style="color:#4fb3ee">    constructor</span><span style="color:#b4b8cf">() {</span></div>
      <div class="ln" style="top:185.75px">14</div><div class="cl" style="top:185.75px"><span style="color:#b4b8cf">        _name = name_;</span></div>
      <div class="ln" style="top:195.25px">15</div><div class="cl" style="top:195.25px"><span style="color:#b4b8cf">        _symbol = symbol_;</span></div>
      <div class="ln" style="top:204.75px">16</div><div class="cl" style="top:204.75px"><span style="color:#b4b8cf">    }</span></div>
      <div class="ln" style="top:214.25px">17</div>
      <div class="ln" style="top:223.75px">18</div><div class="cl" style="top:223.75px"><span style="color:#b4b8cf">}</span></div>
      <div style="left:213px;top:177.500px;font-size:5px;line-height:6px;color:#b4b8cf">▾</div>
      <div style="left:297px;top:176.300px;width:5px;height:9px;border:1px solid #e8e9f2;border-radius:1px"></div>
      <svg style="left:494.500px;top:176.500px;width:5px;height:8px" viewBox="0 0 10 16"><path d="M2 1.500H8M5 1.500V14.500M2 14.500H8" stroke="#c9ccdf" stroke-width="1.800" fill="none"/></svg>
      <style>
      #share .tk{left:207.5px;font-family:"Liberation Mono","DejaVu Sans Mono",monospace;font-size:4.7px;letter-spacing:-0.28px;line-height:7px;font-weight:bold;color:#e6e8f2;white-space:pre}
      #share .tv{left:388.3px;font-family:"Liberation Mono","DejaVu Sans Mono",monospace;font-size:4.7px;letter-spacing:-0.31px;line-height:7px;color:#d2d5e6;white-space:pre}
      #share .cp{width:5.4px;height:6.4px;margin-top:-.4px}
      </style>
      <!-- terminal header band -->
      <div style="left:192px;top:343.500px;width:745px;height:28px;background:#2c2c45"></div>
      <svg style="left:195px;top:359.500px;width:6px;height:6px" viewBox="0 0 12 12"><path d="M2 1.500L6 5L10 1.500M2 6.500L6 10L10 6.500" stroke="#b4b8cf" stroke-width="1.600" fill="none"/></svg>
      <svg style="left:206px;top:359px;width:7px;height:7px" viewBox="0 0 14 14"><circle cx="7" cy="7" r="5" stroke="#e3e5f0" stroke-width="1.700" fill="none"/><path d="M3.500 3.500L10.500 10.500" stroke="#e3e5f0" stroke-width="1.700"/></svg>
      <div style="left:219.500px;top:358.500px;font-size:5.500px;line-height:8px;color:#8b90a8">0</div>
      <div style="left:233.500px;top:358.500px;width:7.500px;height:7.500px;border:1px solid #3d405a;border-radius:1px;background:#2d2f46"></div>
      <div style="left:245px;top:358.500px;font-size:5.800px;line-height:8px;color:#a3a7bd;white-space:nowrap">listen on network</div>
      <svg style="left:307px;top:359px;width:6px;height:6px" viewBox="0 0 12 12"><circle cx="5" cy="5" r="3.300" stroke="#e3e5f0" stroke-width="1.800" fill="none"/><path d="M7.500 7.500L11 11" stroke="#e3e5f0" stroke-width="2"/></svg>
      <div style="left:320px;top:356.500px;width:128.500px;height:12px;background:#34364e;border-radius:1.500px"></div>
      <div style="left:326px;top:358.500px;font-size:6.350px;line-height:8px;color:#777c96;white-space:nowrap">Search with transaction hash or address</div>
      <!-- terminal body -->
      <div style="left:192px;top:371.500px;width:745px;height:154.500px;background:#252439"></div>
      <div style="left:933px;top:467px;width:3px;height:54px;background:#3a3c55;border-radius:1.500px"></div>
      <div class="tk" style="top:377.8px">gas</div><div class="tv" style="top:377.8px">278235 gas</div><svg class="cp" style="left:421.4px;top:378.1px" viewBox="0 0 10 12"><rect x="1" y="3.500" width="5.500" height="7.500" rx="1" stroke="#d2d5e6" stroke-width="1.700" fill="none"/><path d="M3.500 3V1.500H9V9H7" stroke="#d2d5e6" stroke-width="1.700" fill="none"/></svg>
      <div class="tk" style="top:393.5px">transaction cost</div><div class="tv" style="top:393.5px">278235 gas</div><svg class="cp" style="left:421.4px;top:393.8px" viewBox="0 0 10 12"><rect x="1" y="3.500" width="5.500" height="7.500" rx="1" stroke="#d2d5e6" stroke-width="1.700" fill="none"/><path d="M3.500 3V1.500H9V9H7" stroke="#d2d5e6" stroke-width="1.700" fill="none"/></svg>
      <div class="tk" style="top:409.2px">hash</div><div class="tv" style="top:409.2px">0xc56ef97004b3dca66bf37fb418ce4d2e8e1cdb7c131a44bf21f53b9032936b8d</div><svg class="cp" style="left:562.0px;top:409.5px" viewBox="0 0 10 12"><rect x="1" y="3.500" width="5.500" height="7.500" rx="1" stroke="#d2d5e6" stroke-width="1.700" fill="none"/><path d="M3.500 3V1.500H9V9H7" stroke="#d2d5e6" stroke-width="1.700" fill="none"/></svg>
      <div class="tk" style="top:424.2px">input</div><div class="tv" style="top:424.2px">0x608...00033</div><svg class="cp" style="left:428.9px;top:424.5px" viewBox="0 0 10 12"><rect x="1" y="3.500" width="5.500" height="7.500" rx="1" stroke="#d2d5e6" stroke-width="1.700" fill="none"/><path d="M3.500 3V1.500H9V9H7" stroke="#d2d5e6" stroke-width="1.700" fill="none"/></svg>
      <div class="tk" style="top:439.5px">decoded input</div><div class="tv" style="top:439.5px">{}</div><svg class="cp" style="left:401.3px;top:439.8px" viewBox="0 0 10 12"><rect x="1" y="3.500" width="5.500" height="7.500" rx="1" stroke="#d2d5e6" stroke-width="1.700" fill="none"/><path d="M3.500 3V1.500H9V9H7" stroke="#d2d5e6" stroke-width="1.700" fill="none"/></svg>
      <div class="tk" style="top:454.8px">decoded output</div><div class="tv" style="top:454.8px"> - </div><svg class="cp" style="left:403.8px;top:455.1px" viewBox="0 0 10 12"><rect x="1" y="3.500" width="5.500" height="7.500" rx="1" stroke="#d2d5e6" stroke-width="1.700" fill="none"/><path d="M3.500 3V1.500H9V9H7" stroke="#d2d5e6" stroke-width="1.700" fill="none"/></svg>
      <div class="tk" style="top:470.2px">logs</div><div class="tv" style="top:470.2px">[]</div><svg class="cp" style="left:401.3px;top:470.5px" viewBox="0 0 10 12"><rect x="1" y="3.500" width="5.500" height="7.500" rx="1" stroke="#d2d5e6" stroke-width="1.700" fill="none"/><path d="M3.500 3V1.500H9V9H7" stroke="#d2d5e6" stroke-width="1.700" fill="none"/></svg><svg class="cp" style="left:417.7px;top:470.5px" viewBox="0 0 10 12"><rect x="1" y="3.500" width="5.500" height="7.500" rx="1" stroke="#d2d5e6" stroke-width="1.700" fill="none"/><path d="M3.500 3V1.500H9V9H7" stroke="#d2d5e6" stroke-width="1.700" fill="none"/></svg>
      <div class="tk" style="top:485.5px">value</div><div class="tv" style="top:485.5px">0 wei</div><svg class="cp" style="left:408.9px;top:485.8px" viewBox="0 0 10 12"><rect x="1" y="3.500" width="5.500" height="7.500" rx="1" stroke="#d2d5e6" stroke-width="1.700" fill="none"/><path d="M3.500 3V1.500H9V9H7" stroke="#d2d5e6" stroke-width="1.700" fill="none"/></svg>
    </div>
    <div id="toolbar" style="top:672.5px;height:33px">
      <!-- mute -->
      <svg class="tbi" style="left:28.5px;top:4px;width:9px;height:15px" viewBox="0 0 18 30"><rect x="5" y="1" width="8" height="17" rx="4" fill="#d8d8d8"/><path d="M1.500 13v1.500a7.500 7.500 0 0 0 15 0V13M9 22.500V28M4.500 28.500h9" stroke="#d8d8d8" stroke-width="1.800" fill="none" stroke-linecap="round"/></svg>
      <div class="tb" style="left:28.5px;top:20px">Mute</div>
      <svg class="tbi" style="left:48px;top:9px;width:6px;height:4px" viewBox="0 0 12 8"><path d="M1.500 6.500L6 2L10.500 6.500" stroke="#cfcfcf" stroke-width="1.800" fill="none"/></svg>
      <!-- video -->
      <svg class="tbi" style="left:82px;top:6px;width:15px;height:10px" viewBox="0 0 30 20"><rect x="0.500" y="1" width="20" height="18" rx="4" fill="#d8d8d8"/><path d="M22.500 8L29 3V17L22.500 12Z" fill="#d8d8d8" stroke="#d8d8d8" stroke-width="1.500" stroke-linejoin="round"/></svg>
      <div class="tb" style="left:82.5px;top:20px">Stop Video</div>
      <svg class="tbi" style="left:102px;top:9px;width:6px;height:4px" viewBox="0 0 12 8"><path d="M1.500 6.500L6 2L10.500 6.500" stroke="#cfcfcf" stroke-width="1.800" fill="none"/></svg>
      <!-- participants -->
      <svg class="tbi" style="left:394.500px;top:6px;width:16px;height:11px" viewBox="0 0 32 22"><circle cx="11" cy="5.500" r="5" fill="#d8d8d8"/><path d="M1 21c0-6 4-9.500 10-9.500s10 3.500 10 9.500Z" fill="#d8d8d8"/><circle cx="23.500" cy="6.500" r="4" fill="#d8d8d8"/><path d="M22.500 12c5.500-.5 9 2.500 9 8.500h-8c0-3.500-1-6.500-3.500-8Z" fill="#d8d8d8"/></svg>
      <div class="tb" style="left:407.500px;top:6px;font-size:7.500px">8</div>
      <div class="tb" style="left:396px;top:20px">Participants</div>
      <svg class="tbi" style="left:420.500px;top:9px;width:6px;height:4px" viewBox="0 0 12 8"><path d="M1.500 6.500L6 2L10.500 6.500" stroke="#cfcfcf" stroke-width="1.800" fill="none"/></svg>
      <!-- chat -->
      <svg class="tbi" style="left:452.500px;top:5px;width:13px;height:12px" viewBox="0 0 26 24"><path d="M4 1h18a3.500 3.500 0 0 1 3.500 3.500v10a3.500 3.500 0 0 1-3.500 3.500H13l-6 5.500V18H4A3.500 3.500 0 0 1 .5 14.500v-10A3.500 3.500 0 0 1 4 1Z" fill="#d8d8d8"/></svg>
      <div class="tb" style="left:452.500px;top:20px">Chat</div>
      <!-- share -->
      <div class="tbi" style="left:506px;top:5px;width:15px;height:12px;background:#23d05a;border-radius:2.500px"></div>
      <svg class="tbi" style="left:506px;top:7.500px;width:7px;height:7px" viewBox="0 0 14 14"><path d="M7 1.500L12 7H8.800V12.500H5.200V7H2Z" fill="#14331c"/></svg>
      <div class="tb" style="left:506px;top:20px;color:#23d05a">Share Screen</div>
      <!-- record -->
      <div class="tbi" style="left:560px;top:4.500px;width:13px;height:13px;border-radius:50%;border:1.300px solid #d8d8d8"></div>
      <div class="tbi" style="left:560px;top:7px;width:8px;height:8px;border-radius:50%;background:#d8d8d8"></div>
      <div class="tb" style="left:560px;top:20px">Record</div>
      <!-- reactions -->
      <svg class="tbi" style="left:611.500px;top:3.500px;width:15px;height:15px" viewBox="0 0 30 30"><circle cx="13" cy="17" r="11.500" fill="#d8d8d8"/><circle cx="9" cy="14" r="1.800" fill="#1b1b1b"/><circle cx="17" cy="14" r="1.800" fill="#1b1b1b"/><path d="M7 18.500c1.500 5 10.500 5 12 0Z" fill="#1b1b1b"/><path d="M24 1v7M20.500 4.500h7" stroke="#d8d8d8" stroke-width="2.200"/></svg>
      <div class="tb" style="left:611px;top:20px">Reactions</div>
      <!-- leave -->
      <div style="left:890px;top:8.500px;width:39px;height:16.500px;border-radius:4px;background:#d6302f;color:#fff;font-weight:bold;font-size:8px;line-height:16.500px;text-align:center">Leave</div>
    </div>
  </div>
  <div id="chat">
    <style>
    #chat .hd{left:17px;font-size:8.1px;line-height:11px;color:#6b6b6b;white-space:nowrap}
    #chat .hd b{font-weight:normal;color:#2d6a9f}
    #chat .tm{right:11.5px;font-size:7.6px;line-height:11px;color:#707070;white-space:nowrap}
    #chat .bub{left:11.5px;border-radius:9px;background:#e4eefb;font-size:8.4px;line-height:9.9px;color:#222;padding:6.9px 9px 0 8.5px;white-space:nowrap}
    #chat .bub a{color:#2468a8;text-decoration:none}
    #chat .bub.g{background:#ececf4}
    </style>
    <svg style="left:14px;top:11.5px;width:7px;height:5px" viewBox="0 0 14 10"><path d="M2 2.500L7 7.500L12 2.500" stroke="#777" stroke-width="1.800" fill="none"/></svg>
    <div style="left:3px;width:196px;top:9px;text-align:center;font-size:8.300px;line-height:11px;color:#333">Chat</div>
    <div class="hd" style="top:29.500px">Me to <b>Everyone</b></div><div class="tm" style="top:29.500px">1:18 PM</div>
    <div class="bub" style="top:42px;width:49px;height:21px">欢迎！！</div>
    <div class="hd" style="top:67.500px"><b>Tracy</b> to <b>Everyone</b></div><div class="tm" style="top:67.500px">1:19 PM</div>
    <div class="bub g" style="top:81.500px;width:33px;height:20.500px">hello</div>
    <div class="hd" style="top:107.500px">Me to <b>Everyone</b></div><div class="tm" style="top:107.500px">1:19 PM</div>
    <div class="bub" style="top:119.500px;width:156.500px;height:33px">REMIX在线 IDE：<a>https://<br>remix.ethereum.org/</a></div>
    <div class="bub" style="top:156.500px;width:156.500px;height:62px">Notion文档链接：<a>https://<br>www.notion.so/unblocketh/un-Block-<br>Workshop-1-<br>ERC20-278e306f79a549fab7f12ebbb<br>2cecddb</a></div>
    <div class="hd" style="top:223px"><b>Tracy</b> to <b>Everyone</b></div><div class="tm" style="top:223px">1:25 PM</div>
    <div class="bub g" style="top:236px;width:107px;height:21.500px">哦我知道 <span style="background:#b5d3f5">crypto zombies</span></div>
    <!-- input -->
    <div style="left:13px;top:665.500px;font-size:7.800px;line-height:10px;color:#777">To:</div>
    <div style="left:26px;top:665px;width:49px;height:11px;border-radius:3px;background:#1a6fd8;color:#fff;font-size:7.600px;line-height:11px;padding-left:6px">Everyone <span style="font-size:5px;vertical-align:1px">▼</span></div>
    <div style="left:14px;top:682px;font-size:8.300px;line-height:11px;color:#6f6f6f">Type message here...</div>
    <div style="left:172px;top:662.500px;width:14.500px;height:14.500px;border:1px solid #979797;border-radius:3.500px"></div>
    <div style="left:172px;top:662.500px;width:14.500px;height:14.500px;text-align:center;font-size:7px;line-height:16px;color:#555;letter-spacing:.3px;font-weight:bold">···</div>
  </div>
</div>
</body>
</html>
